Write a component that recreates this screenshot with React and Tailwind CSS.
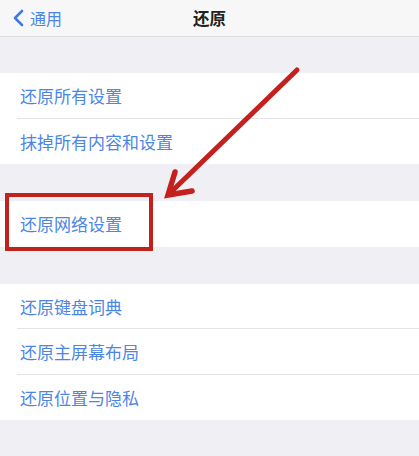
import React from "react";

const font = { fontFamily: '"Noto Sans CJK SC", "Noto Sans", sans-serif' };

function Row({ text, last }) {
  return (
    <div className="h-[45.5px] flex items-center relative">
      <span className="pl-[20px] text-[17px] text-[#4c86e4] leading-none">{text}</span>
      {!last && <div className="absolute bottom-0 left-[17px] right-0 h-px bg-[#e4e4e8]" />}
    </div>
  );
}

function Group({ items }) {
  return (
    <div className="bg-white">
      {items.map((t, i) => (
        <Row key={t} text={t} last={i === items.length - 1} />
      ))}
    </div>
  );
}

export default function App() {
  return (
    <div className="relative w-[419px] h-[456px] bg-[#efeff4] overflow-hidden" style={font}>
      <div className="h-[37px] bg-[#f7f7f8] border-b border-[#dcdce0] flex items-center relative">
        <div className="flex items-center pl-[12px] gap-[6px]">
          <svg width="12" height="18" viewBox="0 0 12 18">
            <path d="M10 2 L3 9 L10 16" fill="none" stroke="#3d7ae6" strokeWidth="2.6" strokeLinecap="round" strokeLinejoin="round" />
          </svg>
          <span className="text-[16px] text-[#4c86e4] leading-none">通用</span>
        </div>
        <div className="absolute left-0 right-0 text-center text-[16.5px] font-semibold text-[#222] leading-none">还原</div>
      </div>
      <div className="h-[36px]" />
      <Group items={["还原所有设置", "抹掉所有内容和设置"]} />
      <div className="h-[37px]" />
      <Group items={["还原网络设置"]} />
      <div className="h-[37px]" />
      <Group items={["还原键盘词典", "还原主屏幕布局", "还原位置与隐私"]} />

      <div className="absolute left-[5px] top-[193px] w-[148px] h-[58px] border-[4.5px] border-[#c4201d]" />
      <svg className="absolute left-0 top-0" width="419" height="456">
        <g stroke="#c4201d" strokeWidth="5" strokeLinecap="round" fill="none">
          <line x1="297" y1="70" x2="170" y2="193" />
          <polyline points="175,172 168,195 192,191" strokeLinejoin="miter" strokeWidth="5.5" />
        </g>
      </svg>
    </div>
  );
}
